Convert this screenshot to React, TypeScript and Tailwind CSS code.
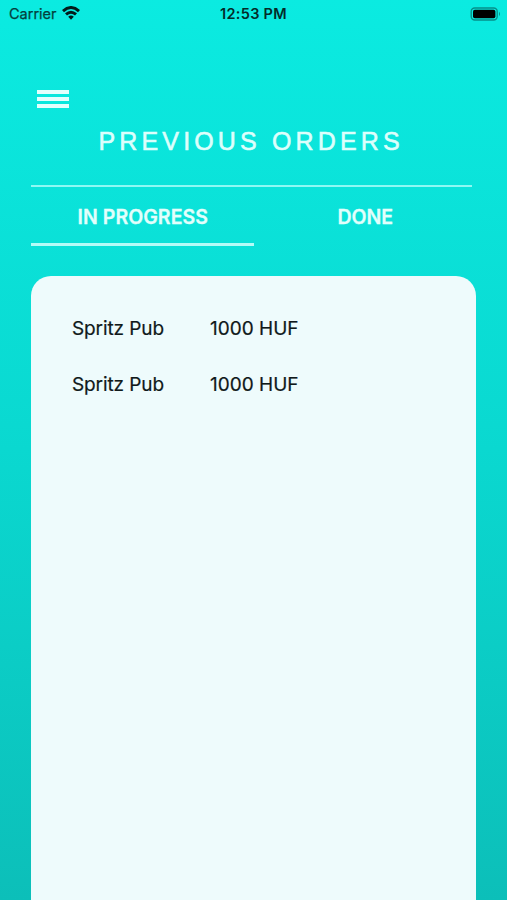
const orders = [
  { place: "Spritz Pub", price: "1000 HUF" },
  { place: "Spritz Pub", price: "1000 HUF" },
];

function StatusBar() {
  return (
    <div className="grid h-7 grid-cols-3 items-center pl-[9px] pr-[6px] text-[#043f3d]">
      <div className="flex items-center gap-[5px]">
        <span className="text-[14.5px] leading-7 [-webkit-text-stroke:0.25px_#043f3d]">Carrier</span>
        <svg className="mb-[2px]" width="18" height="14" viewBox="0 0 18 14" fill="none" stroke="#021b1a" strokeWidth="3">
          <path d="M1 5.1Q9 -2 17 5.1" />
          <path d="M4 8.4Q9 4 14 8.4" />
          <path d="M9 13.7L6.2 10.8Q9 8.4 11.8 10.8Z" fill="#021b1a" stroke="none" />
        </svg>
      </div>
      <span className="-ml-[3px] whitespace-nowrap text-center text-[14.5px] font-semibold leading-7 tracking-[0.3px] text-[#032b29]">12:53 PM</span>
      <svg className="mb-[1px] justify-self-end" width="31" height="14" viewBox="0 0 31 14">
        <rect x="1.2" y="1" width="26" height="12" rx="3.5" fill="none" stroke="#078f89" strokeWidth="1.4" />
        <rect x="3" y="2.7" width="22.4" height="8.6" rx="1.8" fill="#000" />
        <path d="M29 4.8Q31 7 29 9.2Z" fill="#078f89" />
      </svg>
    </div>
  );
}

export default function App() {
  return (
    <div className="flex h-[900px] w-[507px] flex-col overflow-hidden bg-linear-to-b from-[#0bebe1] via-[#0ad8d0] to-[#0cbfb9] font-['Inter','Liberation_Sans',sans-serif]">
      <StatusBar />
      <button aria-label="Menu" className="ml-[37px] mt-[62px] flex w-[31.5px] flex-col gap-[3px]">
        <span className="h-1 bg-[#e4fffd]" />
        <span className="h-1 bg-[#e4fffd]" />
        <span className="h-1 bg-[#e4fffd]" />
      </button>
      <h1 className="ml-[98.5px] mt-[17px] h-8 whitespace-nowrap font-['Liberation_Sans',sans-serif] text-[25px] leading-8 tracking-[4.15px] text-[#dcfffc] [-webkit-text-stroke:0.6px_#dcfffc]">
        PREVIOUS ORDERS
      </h1>
      <div className="ml-[31px] mt-[28px] h-[2px] w-[441px] bg-[#8ef8f3]" />
      <div className="ml-[31px] grid h-[59px] w-[445px] grid-cols-2 text-center text-[19.5px] font-semibold text-[#e2fffc] [-webkit-text-stroke:0.3px_#e2fffc]">
        <button className="flex items-center justify-center border-b-[3px] border-[#b4fbf7] pt-[5px] pl-px tracking-[0.05px]">IN PROGRESS</button>
        <button className="flex items-center justify-center border-b-[3px] border-transparent pt-[5px] pl-px">DONE</button>
      </div>
      <main className="ml-[31px] mt-[30px] w-[445px] flex-1 rounded-t-[20px] bg-[#eefbfc] pl-[41px] pt-[25.5px]">
        {orders.map((order, i) => (
          <div key={i} className="flex h-[55.5px] items-center whitespace-nowrap text-[19px] text-[#10191a] [-webkit-text-stroke:0.2px_#10191a]">
            <span className="w-[138px] tracking-[-0.1px]">{order.place}</span>
            <span>{order.price}</span>
          </div>
        ))}
      </main>
    </div>
  );
}
